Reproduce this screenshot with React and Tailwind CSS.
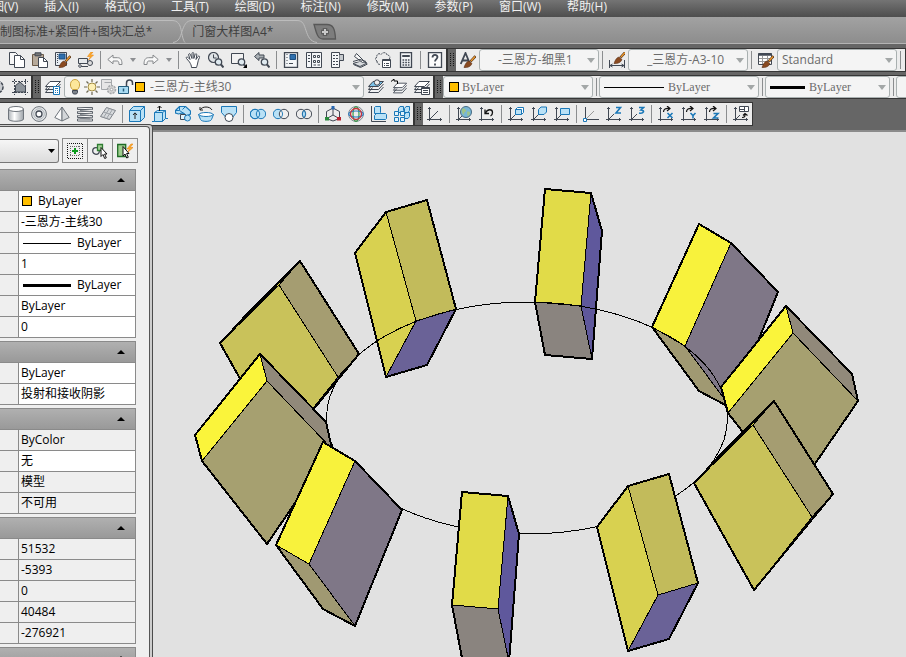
import React, { useState } from "react";

const INK = "#414853";
const BLUE = "#1b78b8";
const SKY = "#b9e1f6";

function Glyph({ children }) {
    return (
        <svg viewBox="0 0 16 16" className="size-4 shrink-0" fill="none" stroke={INK} strokeWidth="1">
            {children}
        </svg>
    );
}

/* L shaped axes, shared by all of the UCS icons */
const Axes = () => (
    <>
        <path d="M2.500 1v14M0 13.500h15M3 13l5-5" />
        <path d="M1 2.500h3M13.500 12v3" />
    </>
);

const Lens = () => (
    <>
        <circle cx="10.500" cy="10" r="3.200" fill="#dfeaf0" strokeWidth="1.300" />
        <path d="M13 12.500l2.500 3" strokeWidth="2" />
    </>
);

const Brush = () => (
    <>
        <path d="M10.500 9.500L15.500 4" stroke="#5a3a20" strokeWidth="2.600" />
        <path d="M11 9l4-4.500" stroke="#f09a2c" strokeWidth="1.200" />
        <path d="M4 15.500c1-3 2.500-6 5-6.500l3 2.500c-1 3-4.500 4.500-8 4z" fill="#8a4a20" stroke="#5b2f14" strokeWidth=".6" />
    </>
);

const Sheets = ({ top = "#fff" }) => (
    <>
        <path d="M4.500 8.500l-4 5h10l5-5.500M4 6l-3.500 4.500h10l5-5.500" fill="#f1f2f3" />
        <path d="M.5 7.500l4.500-5h10.500l-5 5z" fill={top} />
    </>
);

const icons = {
    cut: <path d="M2 2l10 12M12 2L2 14" strokeWidth="2" />,
    copy: (
        <>
            <path d="M.5.500h6l2 2v10h-8z" fill="#f7f7f7" />
            <path d="M5.500 3.500h6l4 4v8h-10z" fill="#fff" />
            <path d="M11.500 3.500v4h4" />
        </>
    ),
    paste: (
        <>
            <path d="M.5 2.500h11v11H.500z" fill="#b7aa9a" stroke="#6d5b48" />
            <path d="M3 .8h6v3H3z" fill="#777" />
            <path d="M6.500 5.500h5l4 4v6h-9z" fill="#fff" />
            <path d="M11.500 5.500v4h4" />
        </>
    ),
    match: (
        <>
            <path d="M.5.500h11v13H.500z" fill="#e8edf2" />
            <path d="M4 2h6v5H4z" fill="#2e6fae" stroke="#1c4e80" />
            <path d="M2.500 2v10" strokeDasharray="1 1" />
            <Brush />
        </>
    ),
    edit: (
        <>
            <path d="M.5 6.500h9v5h-9z" fill="#e6e9ec" />
            <path d="M2 14.500h8" />
            <circle cx="12" cy="11" r="2.500" fill="#ddd" />
            <circle cx="2" cy="14" r="1.300" fill="#fff" />
            <path d="M13 0L9.500 4.500h3L10.500 8l5-5h-3l2.500-3z" fill="#ffb02e" stroke="#e98512" strokeWidth=".6" />
        </>
    ),
    undo: <path d="M.8 7.500L6 3v2.700h4.500c3 0 4.500 2 4.500 6.800h-3c0-2.800-.6-3.500-2-3.500H6v2.800z" stroke="#85888b" fill="#f8f8f8" />,
    redo: <path d="M15.200 7.500L10 3v2.700H5.500C2.500 5.700 1 7.700 1 12.500h3C4 9.700 4.600 9 6 9h4v2.800z" stroke="#85888b" fill="#f8f8f8" />,
    pan: (
        <path
            d="M4.500 10L1.500 6.500c-1-1 .5-2 1.300-1.200L5 7.500 3.700 3c-.3-1.500 1.300-1.800 1.700-.6L7 6.500V1.500c0-1.300 1.800-1.300 1.800 0v5l1.300-4c.4-1.200 2-.8 1.700.5L11 7.500l2-3c.8-1 2-.2 1.500.9C13.500 7.500 13 9 12.700 11c-.2 1.500-.7 2.500-1.200 4.500H6.500c0-2-.8-3.500-2-5.500z"
            fill="#fff"
        />
    ),
    zoom: (
        <>
            <circle cx="5.500" cy="5.500" r="5" fill="#dfe3e6" strokeWidth="1.200" />
            <path d="M5.500 2.500v3.500h3" />
            <Lens />
        </>
    ),
    zoomWindow: (
        <>
            <path d="M.5 1.500h12v10H.500z" fill="#f2f2f2" />
            <Lens />
            <path d="M16 12v4h-4z" fill="#000" stroke="none" />
        </>
    ),
    zoomPrev: (
        <>
            <path d="M.5 4.500L5 .5V3h5v3H5v2.500z" fill="#aab0b5" />
            <Lens />
        </>
    ),
    properties: (
        <>
            <path d="M1.500.500h13v15h-13z" fill="#f4f6f8" strokeWidth="1.300" />
            <path d="M7 2.500h5.500v5H7z" fill="#2e6fae" stroke="#1c4e80" />
            <path d="M4 2v1M4 5v1M4 8v1M4 11v1M6 11.500h4" />
        </>
    ),
    center: (
        <>
            <path d="M.5.500h15v15H.500z" fill="#f4f6f8" />
            <path d="M5.500.500v15M2 3.500h2M2 6.500h2M2 9.500h2" />
            <path d="M7.500 3.500h2v2h-2zM11.500 3.500h2v2h-2zM7.500 8.500h2v2h-2zM11.500 8.500h2v2h-2zM7.500 13H10M11.500 13H14" />
        </>
    ),
    palettes: (
        <>
            <path d="M2.500.500h8v15h-8z" fill="#f4f6f8" />
            <path d="M10.500 2.500h4v6h-4" fill="#c5c9cd" />
            <path d="M4 3.500h5M4 6.500h5M4 9.500h5M4 12.500h5" strokeDasharray="2 1" />
        </>
    ),
    sheet: (
        <>
            <path d="M1 11.500l8-2.500 6 2-7 3.500z" fill="#d8dbde" />
            <path d="M1 9.500l7-2 6 2M4.500 1.500l8 8-2 1-8-6z" fill="#f7f7f7" />
            <path d="M1.500 12.500l7 3 7-3.500" />
        </>
    ),
    markup: (
        <>
            <path d="M2 9C-.5 7.500 0 5.500 2 5.500 1 2.500 4 .5 6 2.500 8-.5 12 .5 12 3c3 0 4 3 1.500 4.500" strokeDasharray="2 1" />
            <path d="M2 9c0 3 2 4 4 3" strokeDasharray="2 1" />
            <path d="M7.500 7.500h8v8h-8z" fill="#fff" />
            <path d="M7.500 8.500h8M9 11.500h1M11 11.500h3M9 13.500h1M11 13.500h3" />
        </>
    ),
    calc: (
        <>
            <path d="M2.500.500h11v15h-11z" fill="#f4f6f8" strokeWidth="1.300" />
            <path d="M4.500 3.500h7v1h-7z" fill="#9fa5ab" />
            <path d="M4.500 8h7M4.500 10.500h7M4.500 13h7" strokeWidth="1.400" strokeDasharray="1.700 1" />
        </>
    ),
    help: (
        <>
            <path d="M1.500.500h13v15h-13z" fill="#fbfbfb" strokeWidth="1.300" />
            <path d="M5.500 5.500c0-3.500 5-3.300 5-.4 0 2-2.500 2-2.500 4.400M8 11.500v2" strokeWidth="1.800" />
        </>
    ),
    textStyle: (
        <>
            <path d="M.8 12L5.500 1 10 12M2.500 8.500h6" strokeWidth="1.800" />
            <Brush />
        </>
    ),
    dimStyle: (
        <>
            <path d="M.5 8v8M15.500 8v8M1 13.500h14M3.500 12L1 13.500 3.500 15M12.500 12l2.500 1.500-2.500 1.500" />
            <g transform="translate(1 -4)"><Brush /></g>
        </>
    ),
    tableStyle: (
        <>
            <path d="M.5 1.500h13v11H.500z" fill="#fff" />
            <path d="M.5 2.500h13" strokeWidth="2.500" />
            <path d="M4.500 4v8M9.500 4v8M1 6.500h12M1 9.500h12" stroke="#999" />
            <Brush />
        </>
    ),
    gear: (
        <>
            <circle cx="8" cy="8" r="6" fill="#c9ccd0" strokeWidth="1.500" strokeDasharray="3 1" />
            <circle cx="8" cy="8" r="2.500" fill="#fff" />
        </>
    ),
    region: (
        <>
            <path d="M2.500 0v16M13.500 0v16M0 2.500h16M0 13.500h16" strokeDasharray="2 1" />
            <path d="M3.500 13V6.500L8 3l5.500 5v5z" fill="#8d949b" />
        </>
    ),
    layers: (
        <>
            <Sheets />
            <path d="M8.500 7.500h6v8h-6z" fill="#fff" stroke={BLUE} />
            <path d="M10 9.500h3" stroke={BLUE} />
            <path d="M10 11.500h3M10 13.500h3" stroke={BLUE} strokeDasharray="1 1" />
        </>
    ),
    layerCurrent: (
        <>
            <Sheets top="#7cc3ea" />
            <circle cx="9" cy="3.500" r="2.700" fill="#eee" />
        </>
    ),
    layerPrev: (
        <>
            <g transform="translate(2 2) scale(.88)"><Sheets /></g>
            <path d="M0 2.500L3 0v2h3.500v3" stroke="#000" />
        </>
    ),
    layerStates: (
        <>
            <Sheets />
            <path d="M7.500 8.500h8v7h-8z" fill="#fff" />
            <path d="M7.500 9.500h8M9 11.500h5M9 13.500h5" />
        </>
    ),
    bulb: (
        <>
            <path d="M5.500 10.500C2 7.500 3 .5 8 .5s6 7 2.500 10z" fill="#fde79a" stroke="#c9a13c" />
            <path d="M5.500 11.500h5v2l-1 1.500h-3l-1-1.500z" fill="#7d838a" />
        </>
    ),
    sun: (
        <>
            <path d="M8 0v3M8 13v3M0 8h3M13 8h3M2.500 2.500l2 2M11.500 11.500l2 2M13.500 2.500l-2 2M4.500 11.500l-2 2" stroke="#6b6650" strokeWidth="1.200" />
            <circle cx="8" cy="8" r="4" fill="#fdf0b5" stroke="#a18b43" />
        </>
    ),
    freeze: (
        <>
            <path d="M.5.500h10v10H.500zM3.500 3.500h7" stroke="#a5a8ab" fill="#e6e6e6" />
            <circle cx="10.500" cy="10.500" r="4" stroke="#a5a8ab" fill="#d3d3d3" strokeWidth="1.500" strokeDasharray="2 1" />
            <circle cx="10.500" cy="10.500" r="1.300" stroke="#a5a8ab" fill="#fff" />
        </>
    ),
    lock: (
        <>
            <path d="M8.500 7V4c0-4 6-4 6 0v2" strokeWidth="1.500" />
            <path d="M.5 7.500h10v7H.500z" fill="#a9dcf4" stroke="#275e7e" />
            <path d="M5.500 9.500v3" stroke="#275e7e" strokeWidth="1.500" />
        </>
    ),
    cylinder: (
        <>
            <path d="M.5 3v10c0 3 15 3 15 0V3" fill="url(#steel)" stroke="#6f757c" />
            <ellipse cx="8" cy="3" rx="7.500" ry="2.500" fill="#fff" stroke="#6f757c" />
        </>
    ),
    torus: (
        <>
            <circle cx="8" cy="8" r="7.400" fill="#e3e6e8" stroke="#6f757c" />
            <circle cx="8" cy="8" r="5.300" stroke="#b3b8bd" />
            <circle cx="8" cy="8" r="3" fill="#fff" strokeWidth="1.300" />
        </>
    ),
    pyramid: (
        <>
            <path d="M8 1L.8 11.500 8 15z" fill="#fbfbfb" stroke="#6f757c" />
            <path d="M8 1l7.200 10.500L8 15z" fill="#d3d6d9" stroke="#6f757c" />
        </>
    ),
    helix: (
        <>
            <path d="M1 2.500h14M1 6.500h14M1 10.500h14M1 14h14" strokeWidth="2.800" stroke="#5d636b" strokeLinecap="round" />
            <path d="M1 2.200l14 .6M1 6.200l14 .6M1 10.200l14 .6M1 14h14" stroke="#fff" />
            <path d="M3 4.500l10 1M3 8.500l10 1M3 12.300l10 .6" stroke="#7b8188" />
        </>
    ),
    plane: (
        <>
            <path d="M.5 10.500L6.500 1.500l9 3-6 9z" fill="#d6d9dc" stroke="#7b8087" />
            <path d="M3.500 6l9 3M9.500 2.500l-6 9M12.500 3.500l-6 9" stroke="#9da2a8" />
        </>
    ),
    box: (
        <>
            <path d="M.5 4.500l4-4h11v11l-4 4H.500z" fill={SKY} stroke={BLUE} />
            <path d="M.5 4.500h11v11M11.500 4.500l4-4" stroke={BLUE} />
            <path d="M6 13V7M4 9l2-2.200L8 9" stroke="#222" />
        </>
    ),
    extrude: (
        <>
            <path d="M2.500 6.500l3-2h8v8l-3 3h-8z" fill={SKY} stroke={BLUE} />
            <path d="M2.500 6.500h8v9M10.500 6.500l3-2M0 15.500h2.500M13.500 12.500H16" stroke={BLUE} />
            <path d="M7.500 5V0M5.500 2l2-2 2 2" stroke="#111" />
        </>
    ),
    sweep: (
        <>
            <path d="M.5 4.500l4-4h6l5 4.500v3l-4 2-4-3-4 1-3-1z" fill={SKY} stroke={BLUE} strokeWidth="1.200" />
            <path d="M4.500.500v4l6 4M.500 4.500h4M10.500.500l-3 3" stroke={BLUE} />
            <path d="M5.500 8.500h5v5h-5z" fill="#e3f3fb" />
            <circle cx="12.500" cy="12" r="3" fill={SKY} stroke={BLUE} />
        </>
    ),
    revolve: (
        <>
            <path d="M.5 8.500h15l-2 5c-1 2.500-10 2.500-11 0z" fill={SKY} stroke={BLUE} />
            <ellipse cx="8" cy="8.500" rx="7" ry="2" fill="#fff" stroke={BLUE} />
            <path d="M2 4c2-4 10-4 12 0M2 1v3h3" stroke="#222" />
        </>
    ),
    loft: (
        <>
            <path d="M.5.500h15v6l-4 5H5l-4.500-5z" fill={SKY} stroke={BLUE} />
            <circle cx="8" cy="11.500" r="4" fill="#fff" />
        </>
    ),
    union: (
        <>
            <circle cx="5" cy="8" r="4.700" fill={SKY} stroke={BLUE} />
            <circle cx="11" cy="8" r="4.700" fill={SKY} stroke={BLUE} />
            <circle cx="5" cy="8" r="4.700" stroke={BLUE} />
        </>
    ),
    subtract: (
        <>
            <circle cx="5" cy="8" r="4.700" fill={SKY} stroke={BLUE} />
            <circle cx="11" cy="8" r="4.700" fill="#efefef" />
            <path d="M8 4.500c2 2 2 5 0 7" stroke={BLUE} />
        </>
    ),
    intersect: (
        <>
            <circle cx="5" cy="8" r="4.700" />
            <circle cx="11" cy="8" r="4.700" />
            <path d="M8 4.400c2 2 2 5.200 0 7.200-2-2-2-5.200 0-7.200z" fill={SKY} stroke={BLUE} />
        </>
    ),
    move3d: (
        <>
            <path d="M8 2L1.500 5.500v7L8 15l6.500-2.500v-7zM8 2v7M8 9l-6 3.500M8 9l6 3.500" />
            <path d="M6.500 0h3v3.500h-3z" fill="#2867b0" stroke="none" />
            <path d="M0 11h4v3.500H0z" fill="#2b8a3c" stroke="none" />
            <path d="M12 11h4v3.500h-4z" fill="#b8222e" stroke="none" />
        </>
    ),
    rotate3d: (
        <>
            <circle cx="8" cy="8" r="7.400" stroke="#7e8a94" />
            <ellipse cx="8" cy="8" rx="3" ry="7.400" stroke="#3b9a4b" strokeWidth="1.200" />
            <ellipse cx="8" cy="8" rx="7.400" ry="3" stroke="#2f7ec2" strokeWidth="1.200" />
            <circle cx="8" cy="8" r="5.500" stroke="#c8323c" strokeWidth="1.300" />
        </>
    ),
    align3d: (
        <>
            <path d="M.5 0v15.500H15" />
            <path d="M3.500 1.500l1-1h5v6l-1 1h-5zM3.500 9.500l2-2h9l1 1v4l-1 1h-11z" fill={SKY} stroke={BLUE} />
        </>
    ),
    array3d: (
        <>
            <path d="M4.500 2.500l1.500-2h3.500v4l-1.500 2H4.500zM10.500 2.500l1.500-2h3.500v4l-1.500 2h-3.500zM10.500 8.500l1.500-2h3.500v4l-1.500 2h-3.500z" fill={SKY} stroke={BLUE} />
            <path d="M.5 5.500h4v4h-4zM6.500 5.500h4v4h-4zM.500 11.500h4v4h-4zM6.500 11.500h4v4h-4z" fill="#e3f3fb" stroke={BLUE} />
        </>
    ),
    ucs: (
        <>
            <Axes />
            <path d="M8 8l3-3" />
        </>
    ),
    ucsWorld: (
        <>
            <Axes />
            <circle cx="10" cy="6" r="5.500" fill="#78b6d6" stroke="#466a80" />
            <path d="M6 3c2-2 3 0 4 1s-2 2-2 4-3-2-2-5zM11 6c2-1 3 0 3 1s-1 3-2.500 3z" fill="#9fc489" stroke="none" />
        </>
    ),
    ucsPrev: (
        <>
            <path d="M2.500 1v14M0 13.500h15M1 2.500h3M13.500 12v3" />
            <path d="M6 3.500v4h4" stroke="#111" strokeWidth="1.300" />
            <path d="M6.500 7c2-4.500 7-4 7-.5 0 2-1 3-2 3.500" stroke="#111" strokeWidth="1.300" />
        </>
    ),
    ucsFace: (
        <>
            <Axes />
            <path d="M7.500 3.500l2-2h6v5l-2 2h-6z" fill="#fff" stroke={BLUE} />
            <path d="M7.500 3.500h6v5h-6z" fill={SKY} stroke={BLUE} />
        </>
    ),
    ucsObject: (
        <>
            <Axes />
            <path d="M7.500 3.500l2.500-2.500h5.500v5L13 8.500H7.500z" fill={SKY} stroke={BLUE} />
        </>
    ),
    ucsView: (
        <>
            <Axes />
            <path d="M6.500 2.500h9v6h-9z" fill={SKY} stroke={BLUE} />
        </>
    ),
    ucsOrigin: (
        <>
            <path d="M2.500 1v12M4 13.500h12" />
            <path d="M3 13l8-8" stroke="#999" />
            <path d="M.5 12.500h3v3h-3z" fill="#fff" stroke={BLUE} />
        </>
    ),
    ucsZ: (
        <>
            <Axes />
            <path d="M10 1.500h4.500L10 7h5" stroke={BLUE} strokeWidth="1.600" />
        </>
    ),
    ucs3: (
        <>
            <Axes />
            <path d="M10 1.500h4.500L12 4c4 0 3 4-2 3" stroke={BLUE} strokeWidth="1.600" />
        </>
    ),
    rotX: (
        <>
            <path d="M2.500 1v14M0 13.500h15M1 2.500h3M13.500 12v3" />
            <path d="M5.500 6c0-3 2-4 6-3.500M9 0l3 2.500-3 2.500" stroke="#111" strokeWidth="1.200" />
            <path d="M9.500 7l5 5M14.500 7l-5 5" stroke={BLUE} strokeWidth="1.600" />
        </>
    ),
    rotY: (
        <>
            <path d="M2.500 1v14M0 13.500h15M1 2.500h3M13.500 12v3" />
            <path d="M5.500 6c0-3 2-4 6-3.500M9 0l3 2.500-3 2.500" stroke="#111" strokeWidth="1.200" />
            <path d="M9.500 7l2.500 2.500L14.500 7M12 9.500V12.500" stroke={BLUE} strokeWidth="1.600" />
        </>
    ),
    rotZ: (
        <>
            <path d="M2.500 1v14M0 13.500h15M1 2.500h3M13.500 12v3" />
            <path d="M5.500 6c0-3 2-4 6-3.500M9 0l3 2.500-3 2.500" stroke="#111" strokeWidth="1.200" />
            <path d="M9.500 7.500h4.500l-4.500 4.500h5" stroke={BLUE} strokeWidth="1.600" />
        </>
    ),
    ucsApply: (
        <>
            <path d="M2.500 1v14M0 13.500h15M1 2.500h3M13.500 12v3M3 13l4-4" />
            <path d="M6.500.500h9v5h-9zM11.500.500v5M6.500 3.500h5" fill="#fff" />
            <path d="M9 11.500c3 0 3-1 3-3.500M10 9.500l2-2 2.500 2" stroke="#111" strokeWidth="1.200" />
        </>
    ),
};

const standardTools = ["cut", "copy", "paste", "match", "edit", "|", "undo", "v", "redo", "v", "|", "pan", "zoom", "zoomWindow", "zoomPrev", "|", "properties", "center", "palettes", "sheet", "markup", "calc", "|", "help"];
const modelingTools = ["cylinder", "torus", "pyramid", "helix", "plane", "|", "box", "extrude", "sweep", "revolve", "loft", "|", "union", "subtract", "intersect", "|", "move3d", "rotate3d", "align3d", "array3d"];
const ucsTools = ["ucs", "|", "ucsWorld", "ucsPrev", "|", "ucsFace", "ucsObject", "ucsView", "|", "ucsOrigin", "ucsZ", "ucs3", "|", "rotX", "rotY", "rotZ", "|", "ucsApply"];

function Separator() {
    return (
        <span className="flex w-[6px] shrink-0 justify-center py-[2px]">
            <span className="w-px bg-[#8b8d8f]"></span>
        </span>
    );
}

function Tool({ name }) {
    if (name === "|") return <Separator />;
    if (name === "v") {
        return (
            <button aria-label="history" className="flex w-[13px] shrink-0 items-center justify-center">
                <svg viewBox="0 0 6 4" className="h-1 w-[6px]"><path d="M0 0h6L3 4z" fill="#8d8f92" /></svg>
            </button>
        );
    }
    return (
        <button aria-label={name} className="flex w-[23px] shrink-0 items-center justify-end pr-[3px] hover:bg-[#d6e6f2]">
            <Glyph>{icons[name]}</Glyph>
        </button>
    );
}

function Toolbar({ grip, className = "", children }) {
    return (
        <div className={`flex h-6 shrink-0 border border-[#363636] bg-[#ececec] ${className}`}>
            {grip && (
                <span className="flex w-2 shrink-0 items-center justify-center bg-[#666]">
                    <svg viewBox="0 0 4 14" className="h-[14px] w-1">
                        <path d="M.5 0v14M3.500 0v14" stroke="#161616" strokeDasharray="1 1" />
                    </svg>
                </span>
            )}
            {children}
        </div>
    );
}

function Combo({ label, value, children, className = "", textClass = "pl-1" }) {
    return (
        <label className={`flex shrink-0 items-center rounded-[3px] border border-[#a9b0b0] bg-[#f4f4f4] ${className}`}>
            {children}
            <select aria-label={label} className={`h-full min-w-0 flex-1 appearance-none bg-transparent text-xs text-[#6b6b6b] outline-none ${textClass}`}>
                <option>{value}</option>
            </select>
            <svg viewBox="0 0 8 5" className="mr-[3px] h-[5px] w-2 shrink-0"><path d="M0 0h8L4 5z" fill="#a3a7a7" /></svg>
        </label>
    );
}

const menus = ["视图(V)", "插入(I)", "格式(O)", "工具(T)", "绘图(D)", "标注(N)", "修改(M)", "参数(P)", "窗口(W)", "帮助(H)"];

function MenuBar() {
    return (
        <nav className="h-[17px] bg-linear-to-b from-[#747474] to-[#4e4e4e]">
            <div className="-ml-5 flex gap-[26px]">
                {menus.map((menu) => (
                    <button key={menu} className="shrink-0 text-xs leading-[14px] text-[#f1f1f1]">{menu}</button>
                ))}
            </div>
        </nav>
    );
}

function DocumentTabs() {
    return (
        <div className="flex h-[27px] items-end overflow-hidden border-b border-[#b4b4b4] bg-linear-to-b from-[#a2a2a2] to-[#8d8d8d] text-xs text-[#3f3f3f]">
            <button className="h-[23px] shrink-0 border-t border-[#bcbcbc] pr-5">制图标准+紧固件+图块汇总*</button>
            <svg viewBox="0 0 20 23" className="h-[23px] w-5 shrink-0" fill="none" stroke="#bcbcbc">
                <path d="M0 .5c6 0 8 4 9 9s2 11 4 13" />
                <path d="M1 22.500c6-1 7-5 9-11S14 .5 20 .5" />
            </svg>
            <button className="h-[23px] shrink-0 border-t border-[#bcbcbc] pr-6">门窗大样图A4*</button>
            <svg viewBox="0 0 20 23" className="h-[23px] w-5 shrink-0" fill="none" stroke="#bcbcbc">
                <path d="M0 .5c6 0 7 4 9 10s4 11 11 12" />
            </svg>
            <button aria-label="new tab" className="-ml-1 h-[23px] shrink-0">
                <svg viewBox="0 0 24 18" className="h-[18px] w-6">
                    <path d="M1 1.500h13c6 0 8 4 8.500 14.500H10C4 16 3 8 1 1.500z" fill="#7d7d7d" stroke="#585858" strokeWidth="1.300" />
                    <path d="M12 5v8M8 9h8" stroke="#5d5d5d" strokeWidth="4.500" />
                    <path d="M12 6v6M9 9h6" stroke="#c9c9c9" strokeWidth="2" />
                </svg>
            </button>
        </div>
    );
}

const groups = [
    [
        { value: "ByLayer", swatch: true },
        { value: "-三恩方-主线30" },
        { value: "ByLayer", line: "h-px" },
        { value: "1" },
        { value: "ByLayer", line: "h-[3px]" },
        { value: "ByLayer" },
        { value: "0" },
    ],
    [{ value: "ByLayer" }, { value: "投射和接收阴影" }],
    [
        { value: "ByColor", readOnly: true },
        { value: "无" },
        { value: "模型", readOnly: true },
        { value: "不可用", readOnly: true },
    ],
    ["51532", "-5393", "0", "40484", "-276921"].map((value) => ({ value, readOnly: true })),
    [],
];

function PropertyGroup({ rows }) {
    const [open, setOpen] = useState(true);

    return (
        <section className="border-r border-b border-[#8a8a8a]">
            <button
                aria-label="toggle group"
                onClick={() => setOpen(!open)}
                className="flex h-[21px] w-full items-center justify-end border-t border-[#8a8a8a] bg-linear-to-b from-[#b0b0b0] to-[#999] pr-[10px]"
            >
                <svg viewBox="0 0 8 4" className="h-1 w-2"><path d="M0 4h8L4 0z" /></svg>
            </button>
            {open && (
                <table className="w-full table-fixed border-separate border-spacing-0 text-xs text-black">
                    <tbody>
                        {rows.map((row, i) => (
                            <tr key={i} className="h-[21px]">
                                <td className="w-[18px] border-t border-[#8a8a8a] p-0"></td>
                                <td className={`border-t border-l border-[#8a8a8a] py-0 pr-0 pl-[2px] ${row.readOnly ? "" : "bg-white"}`}>
                                    <div className="flex h-5 items-center whitespace-nowrap">
                                        {row.swatch && <span className="mr-[6px] ml-px size-[10px] border border-black bg-[#ffbf00]"></span>}
                                        {row.line && <span className={`mr-[6px] ml-[2px] w-12 bg-black ${row.line}`}></span>}
                                        {row.value}
                                    </div>
                                </td>
                            </tr>
                        ))}
                    </tbody>
                </table>
            )}
        </section>
    );
}

function PropertiesPalette() {
    return (
        <aside className="relative -mt-[2px] w-[153px] shrink-0 overflow-hidden rounded-tr-[4px] border-t border-r border-[#4b4b4b] bg-[#cdcdcd] pt-px pr-[2px]">
            <div className="h-full overflow-hidden rounded-tr-[4px] border-t border-r border-[#555] bg-[#efefef] pt-[11px]">
                <div className="mb-[6px] flex items-center gap-[3px]">
                    <label className="flex h-6 w-[59px] items-center rounded-r-[3px] border border-l-0 border-[#777] bg-linear-to-b from-[#f6f6f6] to-[#dcdcdc]">
                        <select aria-label="selection" className="h-full min-w-0 flex-1 appearance-none bg-transparent text-xs outline-none">
                            <option></option>
                        </select>
                        <svg viewBox="0 0 7 4" className="mr-[3px] h-1 w-[7px] shrink-0"><path d="M0 0h7L3.500 4z" /></svg>
                    </label>
                    <div className="flex h-[25px] divide-x divide-[#8a8a8a] border border-[#8a8a8a]">
                        <button aria-label="pick add" className="flex w-[25px] items-center justify-center">
                            <Glyph>
                                <g strokeDasharray="1 1" strokeDashoffset=".5" stroke="#111">
                                    <path d="M.5.500h15v15H.500z" />
                                    <path d="M3 3.500h10M3 12.500h10M3.500 3v10M12.500 3v10" stroke="#666" strokeDashoffset="0" />
                                </g>
                                <path d="M8 5v6M5 8h6" stroke="#0b9a1c" strokeWidth="2" />
                            </Glyph>
                        </button>
                        <button aria-label="select objects" className="flex w-[25px] items-center justify-center">
                            <Glyph>
                                <circle cx="4" cy="8" r="3.300" strokeWidth="1.300" />
                                <path d="M5.500 1.500h5v6h-5z" fill="#a6d598" stroke="#2f7d32" strokeWidth="1.300" />
                                <path d="M9 4.500v9l2-2 1.700 4 1.600-.7-1.700-3.800H15z" fill="#fff" stroke="#111" />
                            </Glyph>
                        </button>
                        <button aria-label="quick select" className="flex w-6 items-center justify-center">
                            <Glyph>
                                <path d="M.7 1.500h8v12h-8z" fill="#9fce8f" stroke="#1f6b25" strokeWidth="1.300" />
                                <path d="M14 1l-4 5h2.500L10 10l6-5.500h-3L16 1z" fill="#ffb02e" stroke="#e98512" strokeWidth=".6" />
                                <path d="M6 3.500v9.500l2-2 1.700 4 1.600-.7-1.700-3.800H12z" fill="#fff" stroke="#111" />
                            </Glyph>
                        </button>
                    </div>
                </div>
                <div className="flex w-[136px] flex-col gap-[3px]">
                    {groups.map((rows, i) => <PropertyGroup key={i} rows={rows} />)}
                </div>
            </div>
        </aside>
    );
}

/* every solid is listed by its outline and by its visible faces */
const slab = {
    outline: "220,343 300,261 359,354 280,450",
    faces: [
        ["220,343 250,310 300,261 279,285", "#e9e13c"],
        ["220,343 279,285 338,377 280,450", "#c9c25a"],
        ["279,285 300,261 359,354 338,377", "#a59d71"],
        ["338,377 359,354 280,450", "#4b449a"],
    ],
};
const leaning = {
    outline: "386,212 427,200 456,309 427,365 386,377 355,253",
    faces: [
        ["386,212 355,253 386,377 416,321", "#d8d150"],
        ["386,212 427,200 456,309 416,321", "#c2bb5b"],
        ["416,321 456,309 427,365 386,377", "#6a6297"],
    ],
};
const upright = {
    outline: "545,189 591,193 602,231 592,359 545,355 535,302",
    faces: [
        ["545,189 591,193 581,306 535,302", "#e1db48"],
        ["591,193 602,231 592,359 581,306", "#5f589c"],
        ["535,302 581,306 592,359 545,355", "#8a847f"],
    ],
};
const tilted = {
    outline: "699,224 731,243 778,292 731,408 699,391 652,327",
    faces: [
        ["699,224 731,243 685,346 652,327", "#f8f23c"],
        ["731,243 778,292 731,408 685,346", "#7f7787"],
        ["652,327 685,346 731,408 699,391", "#a09972"],
    ],
};
const wide = {
    outline: "786,306 852,374 858,401 793,496 728,413 721,387",
    faces: [
        ["786,306 793,333 728,413 721,387", "#faf43b"],
        ["793,333 858,401 793,496 728,413", "#a6a070"],
        ["786,306 852,374 858,401 793,333", "#91897a"],
    ],
};

function Solid({ shape, dx = 0, dy = 0 }) {
    return (
        <g transform={`translate(${dx} ${dy})`} stroke="#000" strokeLinejoin="round">
            {shape.faces.map(([points, fill]) => <polygon key={points} points={points} fill={fill} />)}
            <polygon points={shape.outline} fill="none" strokeWidth="2" />
        </g>
    );
}

function ModelView() {
    return (
        <main className="mt-1 min-w-0 flex-1 overflow-hidden border-t-2 border-[#8b8b8b] bg-[#e1e1e1]">
            <svg viewBox="153 132 753 525" preserveAspectRatio="xMinYMin slice" shapeRendering="crispEdges" className="block h-full w-full">
                <Solid shape={leaning} />
                <Solid shape={upright} />
                <Solid shape={tilted} />
                <ellipse cx="527" cy="418" rx="200.500" ry="116" fill="none" stroke="#000" />
                <Solid shape={slab} />
                <Solid shape={wide} />
                <Solid shape={slab} dx={474} dy={140} />
                <Solid shape={wide} dx={-526} dy={48} />
                <Solid shape={tilted} dx={-376} dy={218} />
                <Solid shape={upright} dx={-83} dy={303} />
                <Solid shape={leaning} dx={242} dy={274} />
            </svg>
        </main>
    );
}

function App() {
    return (
        <div className="flex h-screen flex-col overflow-hidden bg-[#666] font-['Open_Sans','Noto_Sans_CJK_SC',sans-serif]">
            <svg className="absolute size-0" aria-hidden="true">
                <defs>
                    <linearGradient id="steel">
                        <stop offset="0" stopColor="#aeb3b8" />
                        <stop offset=".4" stopColor="#fff" />
                        <stop offset="1" stopColor="#9ea4aa" />
                    </linearGradient>
                </defs>
            </svg>
            <MenuBar />
            <DocumentTabs />

            <div className="flex flex-col gap-[3px] overflow-hidden pt-1">
                {/* Standard and styles */}
                <div className="flex">
                    <Toolbar className="-ml-[19px]">
                        {standardTools.map((name, i) => <Tool key={i} name={name} />)}
                    </Toolbar>
                    <Toolbar grip className="flex-1">
                        <Tool name="textStyle" />
                        <Combo label="text style" value="-三恩方-细黑1" className="w-[120px]" textClass="pl-[18px]" />
                        <Separator />
                        <Tool name="dimStyle" />
                        <Combo label="dimension style" value="_三恩方-A3-10" className="w-[120px]" textClass="pl-[18px]" />
                        <Separator />
                        <Tool name="tableStyle" />
                        <Combo label="table style" value="Standard" className="w-[120px]" />
                        <Separator />
                    </Toolbar>
                </div>

                {/* Layers and object properties */}
                <div className="flex">
                    <Toolbar className="-ml-4">
                        <Tool name="gear" />
                        <Tool name="region" />
                    </Toolbar>
                    <Toolbar grip>
                        <Tool name="layers" />
                        <Combo label="layer" value="-三恩方-主线30" className="w-[300px]" textClass="pl-[5px]">
                            <span className="flex items-center gap-px pl-[2px]">
                                <Glyph>{icons.bulb}</Glyph>
                                <Glyph>{icons.sun}</Glyph>
                                <Glyph>{icons.freeze}</Glyph>
                                <Glyph>{icons.lock}</Glyph>
                                <span className="size-[10px] border border-black bg-[#ffbf00]"></span>
                            </span>
                        </Combo>
                        <Tool name="layerCurrent" />
                        <Tool name="layerPrev" />
                        <Tool name="layerStates" />
                    </Toolbar>
                    <Toolbar grip className="flex-1 font-['Liberation_Serif',serif]">
                        <Combo label="color" value="ByLayer" className="w-[150px]" textClass="pl-[3px]">
                            <span className="ml-[5px] size-[10px] border border-black bg-[#ffbf00]"></span>
                        </Combo>
                        <Separator />
                        <Combo label="linetype" value="ByLayer" className="w-[160px]">
                            <span className="ml-1 h-px w-[60px] bg-black"></span>
                        </Combo>
                        <Separator />
                        <Combo label="lineweight" value="ByLayer" className="w-[125px]">
                            <span className="ml-1 h-[3px] w-[35px] bg-black"></span>
                        </Combo>
                        <Separator />
                        <Combo label="plot style" value="" className="w-[120px]" />
                    </Toolbar>
                </div>

                {/* Modeling and UCS */}
                <div className="flex">
                    <Toolbar className="border-l-0 pl-1">
                        {modelingTools.map((name, i) => <Tool key={i} name={name} />)}
                    </Toolbar>
                    <Toolbar grip>
                        {ucsTools.map((name, i) => <Tool key={i} name={name} />)}
                    </Toolbar>
                </div>
            </div>

            <div className="flex min-h-0 flex-1">
                <PropertiesPalette />
                <ModelView />
            </div>
        </div>
    );
}

export default App;
